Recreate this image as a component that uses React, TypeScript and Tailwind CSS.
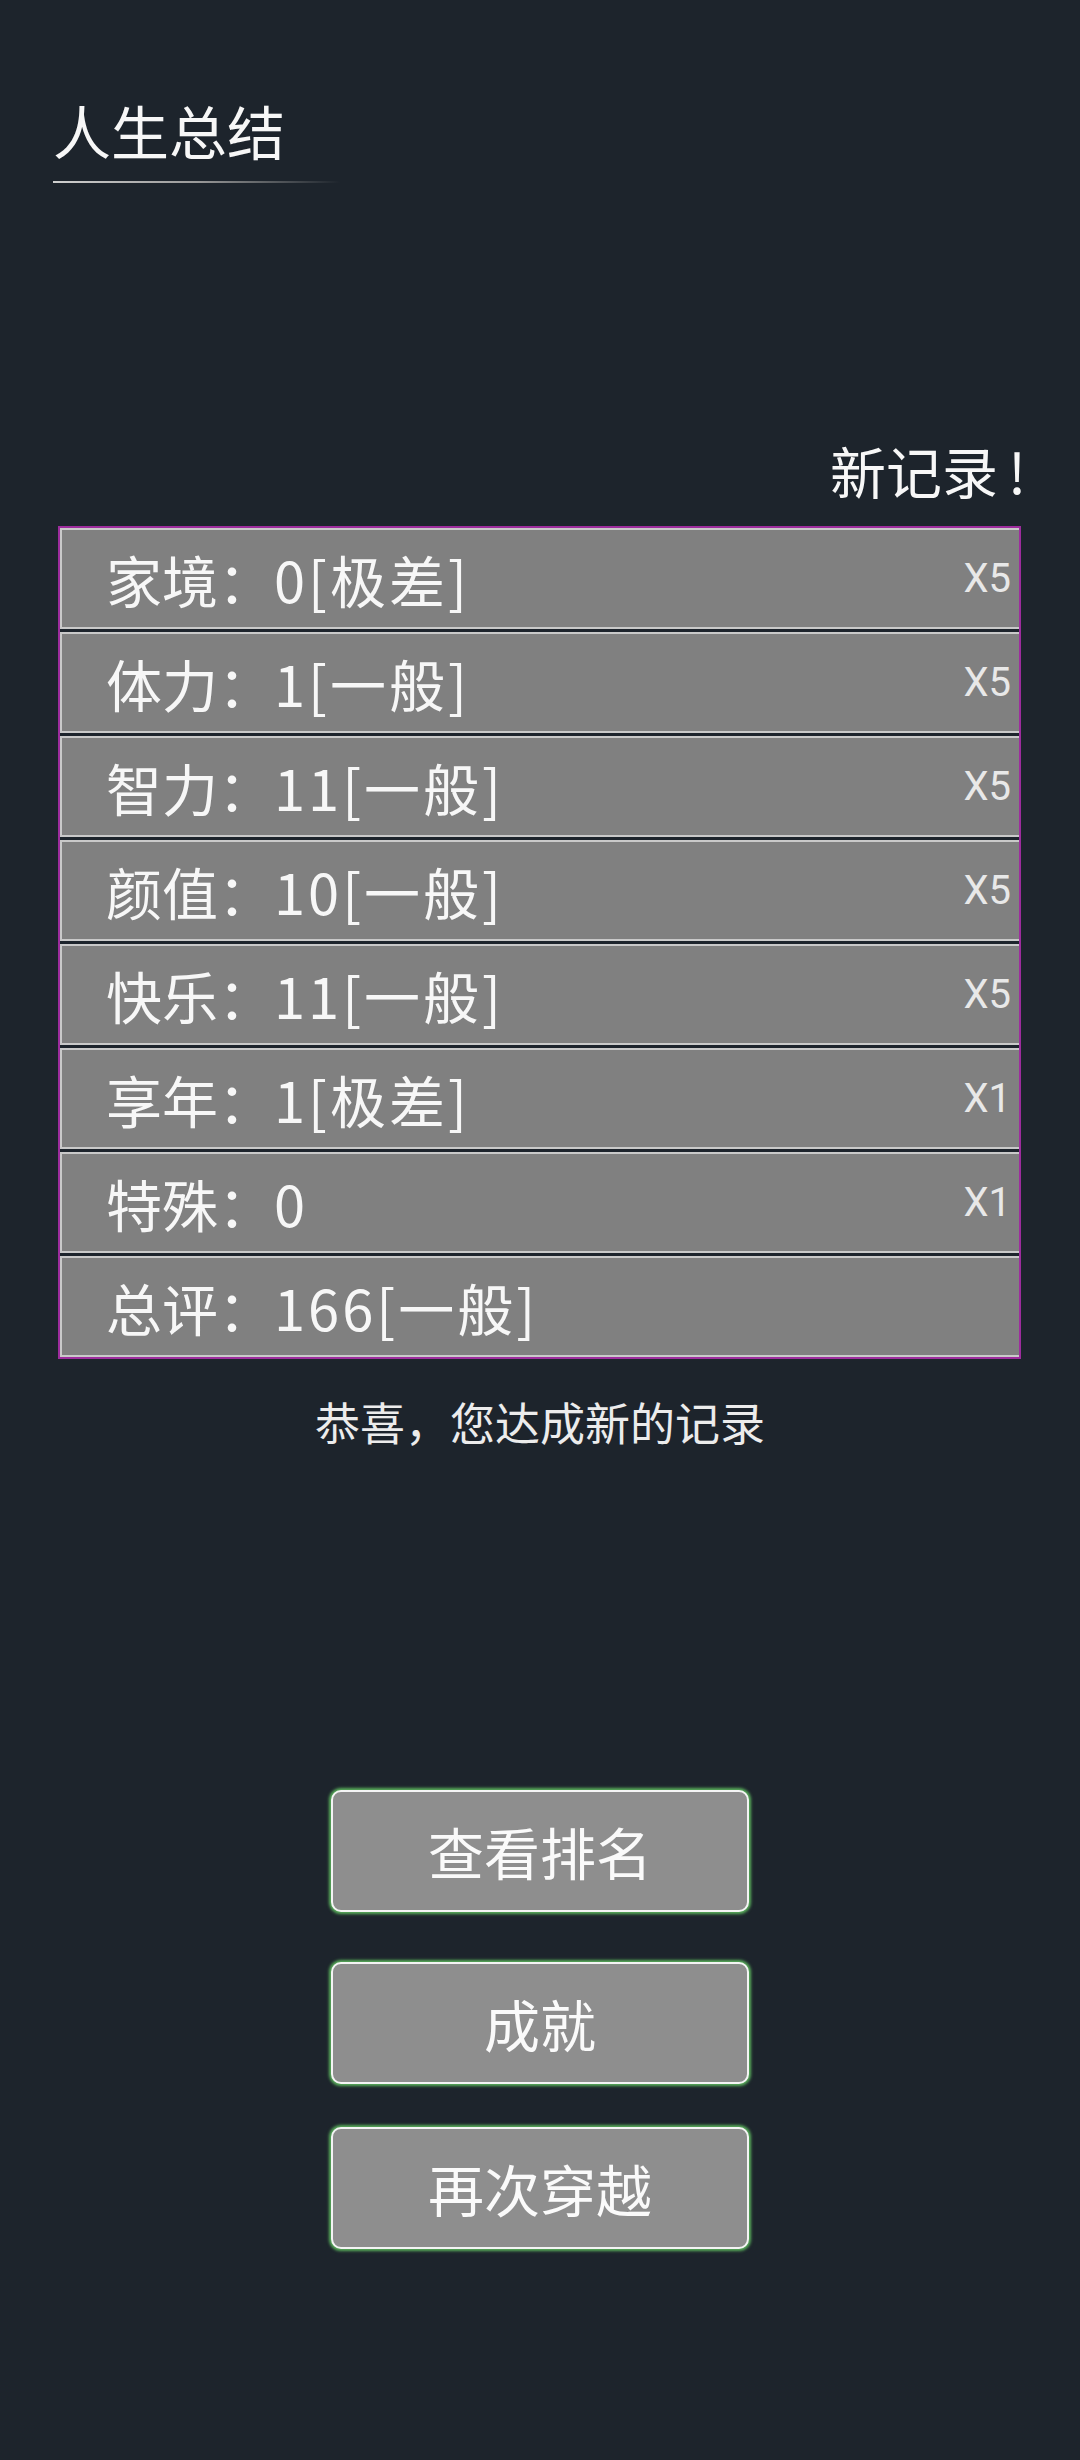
const rows = [
  { name: "家境：", value: "0[极差]", mult: "X5" },
  { name: "体力：", value: "1[一般]", mult: "X5" },
  { name: "智力：", value: "11[一般]", mult: "X5" },
  { name: "颜值：", value: "10[一般]", mult: "X5" },
  { name: "快乐：", value: "11[一般]", mult: "X5" },
  { name: "享年：", value: "1[极差]", mult: "X1" },
  { name: "特殊：", value: "0", mult: "X1" },
  { name: "总评：", value: "166[一般]", mult: "" },
];

const buttons = [
  { text: "查看排名", margin: "mt-[346px]" },
  { text: "成就", margin: "mt-[50px]" },
  { text: "再次穿越", margin: "mt-[43px]" },
];

function StatRow({ name, value, mult }: { name: string; value: string; mult: string }) {
  return (
    <div className="flex h-[101px] items-center justify-between border-y-2 border-l-2 border-[#c9c9c9] bg-[#808080] pl-[44px] pr-[8px]">
      <span className="text-[56px] leading-none text-[#f7f7f7]">
        {name}
        <span className="tracking-[3px]">{value}</span>
      </span>
      {mult && (
        <span className="font-['Roboto',sans-serif] text-[40px] leading-none text-[#e8e8e8]">
          {mult}
        </span>
      )}
    </div>
  );
}

export default function App() {
  return (
    <div className="flex h-[2460px] w-[1080px] flex-col bg-[#1d242c] font-['Noto_Sans_CJK_SC','Noto_Sans',sans-serif] text-white">
      {/* Header */}
      <div className="ml-[53px] pt-[101px]">
        <div className="text-[58px] leading-none text-[#f7f7f7]">人生总结</div>
        <div className="mt-[22px] h-[2px] w-[287px] bg-gradient-to-r from-[#d0d0d0] via-[#9a9a9a] to-transparent" />
      </div>

      {/* Record table */}
      <div className="mx-[58px] mt-[259px] flex w-[963px] flex-col">
        <div className="mr-[-5px] flex justify-end">
          <span className="text-[56px] leading-none text-[#f7f7f7]">
            新记录<span className="ml-[10px]">!</span>
          </span>
        </div>
        <div className="mt-[28px] flex flex-col gap-[3px] border-2 border-[#9d2c9d]">
          {rows.map((r) => (
            <StatRow key={r.name} name={r.name} value={r.value} mult={r.mult} />
          ))}
        </div>
      </div>

      <div className="mt-[40px] text-center text-[45px] leading-none text-[#ececec]">
        恭喜，您达成新的记录
      </div>

      {/* Actions */}
      <div className="flex flex-col items-center">
        {buttons.map((b) => (
          <button
            key={b.text}
            className={`${b.margin} flex h-[122px] w-[418px] items-center justify-center rounded-[10px] border-2 border-[#f4f4f4] bg-[#8e8e8e] text-[56px] leading-none text-[#fafafa] shadow-[0_0_3px_2px_rgba(100,200,100,0.85)]`}
          >
            {b.text}
          </button>
        ))}
      </div>
    </div>
  );
}
